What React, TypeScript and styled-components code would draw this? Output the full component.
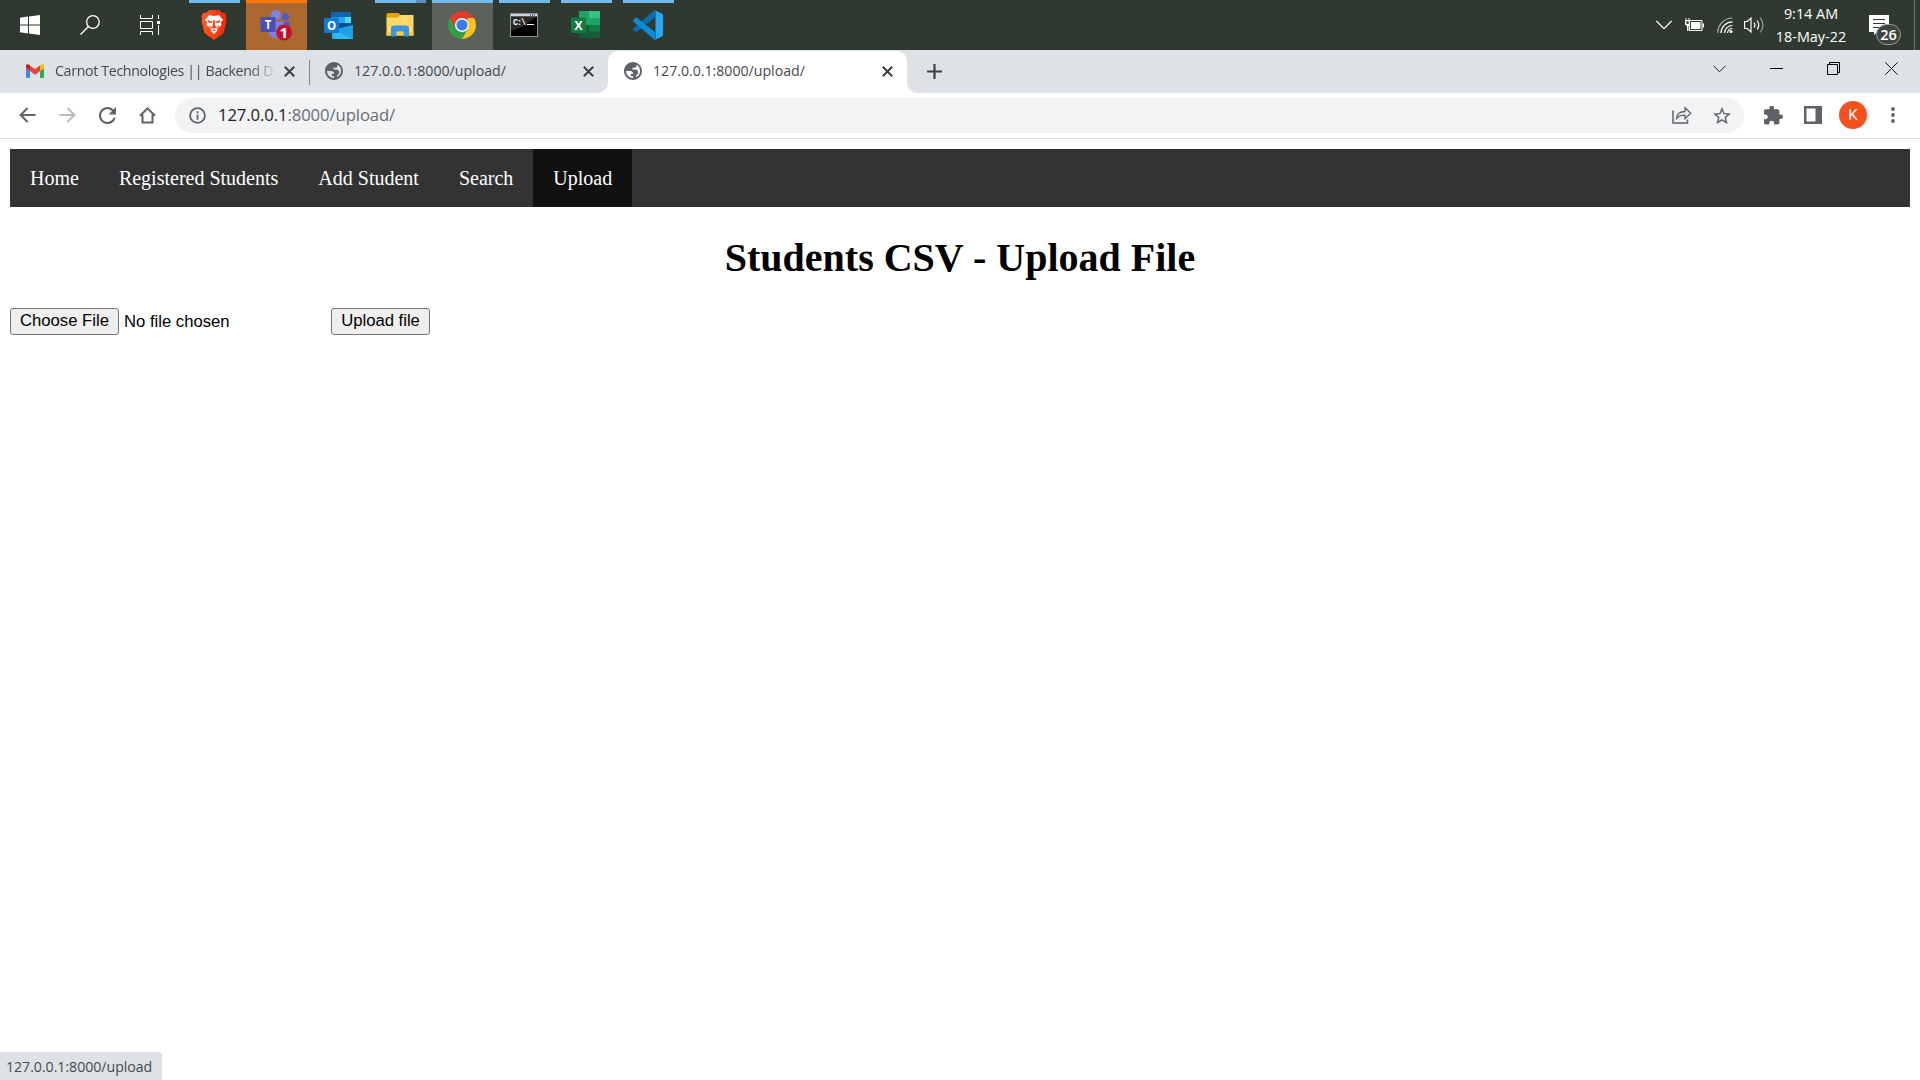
import React from "react";
import styled, { createGlobalStyle, css } from "styled-components";

const ui = `"Open Sans", "Noto Sans", sans-serif`;

const GlobalStyle = createGlobalStyle`
  * { box-sizing: border-box; }
  html, body { margin: 0; padding: 0; background: #fff; overflow: hidden; }
  svg { display: block; flex: none; }
`;

const Screen = styled.div`
  display: flex;
  flex-direction: column;
  width: 1920px;
  height: 1080px;
  background: #fff;
`;

/* ---------- Taskbar ---------- */

const Taskbar = styled.header`
  display: flex;
  justify-content: space-between;
  height: 50px;
  background: #2f3930;
`;

const TaskGroup = styled.div`
  display: flex;
`;

const SystemButton = styled.div`
  display: flex;
  align-items: center;
  justify-content: center;
  width: 60px;
  height: 50px;
`;

const Apps = styled.div`
  display: flex;
  gap: 1px;
  margin-left: 4px;
`;

type Mode = "running" | "active" | "alert" | "idle" | "stacked";

const AppSlot = styled.div<{ $mode: Mode }>`
  display: flex;
  flex-direction: column;
  align-items: center;
  width: 61px;
  height: 50px;
  background: ${(p) => (p.$mode === "active" ? "#5a6259" : p.$mode === "alert" ? "#ab692f" : "transparent")};
`;

const RunBar = styled.div<{ $mode: Mode }>`
  width: ${(p) => (p.$mode === "active" || p.$mode === "alert" ? "61px" : "51px")};
  height: 3px;
  ${(p) => p.$mode === "running" && css`background: #76b9ed;`}
  ${(p) => p.$mode === "active" && css`background: #76b9ed;`}
  ${(p) => p.$mode === "alert" && css`background: #ff7700;`}
  ${(p) => p.$mode === "stacked" && css`background: linear-gradient(90deg, #76b9ed 41px, #5a8db8 41px);`}
`;

const AppIcon = styled.div`
  display: flex;
  align-items: center;
  justify-content: center;
  height: 44px;
  padding-right: 2px;
`;

const Tray = styled.div`
  display: flex;
  align-items: center;
  height: 50px;
`;

const TrayIcon = styled.div<{ $w: number }>`
  display: flex;
  align-items: center;
  justify-content: center;
  width: ${(p) => p.$w}px;
  height: 50px;
`;

const Clock = styled.div`
  display: flex;
  flex-direction: column;
  align-items: center;
  width: 86px;
  padding-bottom: 1px;
  font: 14.4px/23px ${ui};
  letter-spacing: 0;
  color: #fff;
  white-space: nowrap;
`;

const Notifications = styled.div`
  position: relative;
  width: 61px;
  height: 50px;
  padding: 15px 0 0 15px;
  border-right: 1px solid #6d746d;
  margin-right: 5px;
`;

const Count = styled.span`
  position: absolute;
  left: 22px;
  top: 24px;
  width: 25px;
  height: 21px;
  border: 1px solid #9a9f9a;
  border-radius: 11px;
  background: #3e443f;
  color: #fff;
  font: 600 14.5px/19px ${ui};
  text-align: center;
`;

/* ---------- Browser chrome ---------- */

const TabStrip = styled.div`
  display: flex;
  justify-content: space-between;
  height: 43px;
  background: #dee1e6;
`;

const Tabs = styled.div`
  display: flex;
  padding: 1px 0 0 10px;
`;

const Tab = styled.div<{ $active?: boolean }>`
  position: relative;
  display: flex;
  align-items: center;
  width: 299px;
  height: 42px;
  padding: 0 14px 2px 16px;
  border-radius: 10px 10px 0 0;
  background: ${(p) => (p.$active ? "#fff" : "transparent")};
  ${(p) =>
    p.$active &&
    css`
      &::before,
      &::after {
        content: "";
        position: absolute;
        bottom: 0;
        width: 10px;
        height: 10px;
      }
      &::before {
        left: -10px;
        background: radial-gradient(circle at 0 0, transparent 9.5px, #fff 10px);
      }
      &::after {
        right: -10px;
        background: radial-gradient(circle at 100% 0, transparent 9.5px, #fff 10px);
      }
    `}
`;

const TabTitle = styled.span<{ $fade?: boolean }>`
  flex: 1;
  margin: 0 8px 0 11px;
  overflow: hidden;
  white-space: nowrap;
  font: 14.2px/22px ${ui};
  letter-spacing: ${(p) => (p.$fade ? "-0.33px" : "-0.03px")};
  color: #45494d;
  padding-bottom: 1px;
  ${(p) => p.$fade && css`mask-image: linear-gradient(90deg, #000 195px, transparent 221px);`}
`;

const Separator = styled.div`
  width: 1px;
  height: 25px;
  margin: 9px -1px 0 0;
  background: #80858b;
`;

const NewTab = styled.div`
  display: flex;
  align-items: center;
  justify-content: center;
  width: 55px;
  height: 40px;
`;

const WindowControls = styled.div`
  display: flex;
  height: 37px;
`;

const ControlButton = styled.div`
  display: flex;
  align-items: center;
  justify-content: center;
  width: 57.4px;
`;

const Toolbar = styled.div`
  display: flex;
  align-items: center;
  height: 46px;
  border-bottom: 1px solid #dadce0;
  background: #fff;
  padding: 0 7px 1px 8px;
`;

const ToolButton = styled.div<{ $w?: number }>`
  display: flex;
  align-items: center;
  justify-content: center;
  width: ${(p) => p.$w ?? 40}px;
  height: 40px;
`;

const Omnibox = styled.div`
  display: flex;
  align-items: center;
  width: 1570px;
  height: 35px;
  margin: 0 9px 0 7px;
  padding: 0 2px 0 14px;
  border-radius: 18px;
  background: #f1f3f4;
`;

const Address = styled.span`
  flex: 1;
  margin-left: 12px;
  font: 16.7px/24px ${ui};
  letter-spacing: -0.1px;
  color: #6a6e73;
  b { font-weight: 400; color: #202124; }
`;

const Avatar = styled.div`
  width: 28px;
  height: 28px;
  border-radius: 50%;
  background: #f4511e;
  color: #fff;
  font: 15px/28px Roboto, sans-serif;
  text-align: center;
`;

/* ---------- Page ---------- */

const Page = styled.main`
  position: relative;
  flex: 1;
  padding: 10px;
  font-family: "Liberation Serif", serif;
`;

const Nav = styled.nav`
  display: flex;
  height: 58px;
  background: #333;
`;

const NavLink = styled.a<{ $active?: boolean }>`
  padding: 18px 20px 17px;
  font-size: 20px;
  line-height: 23px;
  color: #fff;
  background: ${(p) => (p.$active ? "#111" : "transparent")};
`;

const Title = styled.h1`
  margin: 27px 0;
  font-size: 40px;
  line-height: 47px;
  text-align: center;
`;

const Form = styled.div`
  display: flex;
  align-items: center;
  font: 16.667px/20px "Liberation Sans", Arial, sans-serif;
`;

const FormButton = styled.button<{ $w: number }>`
  width: ${(p) => p.$w}px;
  height: 27px;
  padding: 0 0 2px;
  border: 1px solid #767676;
  border-radius: 3px;
  background: #efefef;
  font: inherit;
  color: #000;
  white-space: nowrap;
`;

const FileName = styled.span`
  width: 207px;
  margin-left: 5px;
`;

const StatusBubble = styled.div`
  position: absolute;
  left: 0;
  bottom: 0;
  width: 162px;
  height: 28px;
  padding-left: 6px;
  border-radius: 0 5px 0 0;
  background: #dee1e6;
  box-shadow: 0 0 1px #b9bcc1;
  font: 14.2px/29px ${ui};
  letter-spacing: -0.05px;
  color: #45494d;
`;

/* ---------- Icons ---------- */

const Globe = () => (
  <svg width="18" height="18" viewBox="2 2 20 20">
    <path fill="#5f6368" d="M12 2C6.48 2 2 6.48 2 12s4.48 10 10 10 10-4.480 10-10S17.520 2 12 2zm0 17.800c-4.300 0-7.800-3.400-7.800-7.800h4.300c2.400 0 3.700 1 3.700 3.100H9.600v2.700h2.600c.3.900-.1 1.500-.2 2zm3.500-.9v-2.500c1.500-.2 2.200-1.400 2.200-3 0-2.200-1.300-3.200-3.300-3.200h-3V8.300h2.700c1.300 0 1.900-1.200 1.900-3.300 2.300 1.200 3.800 3.900 3.800 7 0 3-1.700 5.600-4.300 6.900z" />
  </svg>
);

const Close = () => (
  <svg width="11" height="11" viewBox="0 0 11 11" stroke="#3c4043" strokeWidth="2">
    <path d="M.8.8l9.400 9.400M10.200.8L.8 10.200" />
  </svg>
);

const Gmail = () => (
  <svg width="18" height="18" viewBox="0 0 18 18">
    <path fill="#4285f4" d="M0 6l4 3v7H1.200A1.200 1.200 0 0 1 0 14.800z" />
    <path fill="#34a853" d="M18 6l-4 3v7h2.800a1.200 1.200 0 0 0 1.200-1.200z" />
    <path fill="#ea4335" d="M4 3.500l5 3.800 5-3.800V9l-5 3.800L4 9z" />
    <path fill="#c5221f" d="M0 4.200C0 2.200 2.200 1.800 3.500 3L4 3.500V9L0 6z" />
    <path fill="#fbbc04" d="M18 4.200c0-2-2.200-2.400-3.500-1.200l-.5.500V9l4-3z" />
  </svg>
);

const Windows = () => (
  <svg width="20" height="20" viewBox="0 0 20 20" fill="#fff">
    <path d="M0 2.800L8 1.600V9.500H0zM9 1.500L20 0v9.500H9zM0 10.500h8v7.900L0 17.200zM9 10.500h11V20L9 18.500z" />
  </svg>
);

const Search = () => (
  <svg width="20" height="20" viewBox="0 0 20 20" fill="none" stroke="#fff" strokeWidth="1.300">
    <circle cx="12.900" cy="7" r="6.300" />
    <path d="M8.500 11.500L.5 19.500" />
  </svg>
);

const TaskView = () => (
  <svg width="20" height="20" viewBox="0 0 20 20" fill="none" stroke="#fff">
    <path d="M.5 0v3.500h12V0M.5 20v-3.500h12V20M.5 6.500h12v7H.5zM18.500 0v4M18.500 10v10" />
    <path d="M17 6h3v3h-3z" fill="#fff" stroke="none" />
  </svg>
);

const Brave = () => (
  <svg width="26" height="30" viewBox="0 0 26 30">
    <defs>
      <linearGradient id="brave">
        <stop offset="0" stopColor="#ff5a1f" />
        <stop offset="1" stopColor="#f9250b" />
      </linearGradient>
    </defs>
    <path fill="url(#brave)" d="M8 0h10l3 3 2.500-.2L25.500 6 25 9l.5 2-3 12L13 30 3.500 23 .5 11 1 9 .5 6l2-3.200L5 3z" />
    <path fill="#fff" d="M8 5l5 1 5-1 4 5-2 2 .5 3-4.500 4 .5 1.500L13 24l-3.500-3.500.5-1.500-4.500-4L6 12l-2-2z" />
    <path fill="#fb421c" d="M6.500 10l5 1.500-1 1.500-3-.5zM19.500 10l-5 1.500 1 1.500 3-.5zM12.300 10h1.400l.5 6 2 1.200L13 18.800 9.800 17.200l2-1.200zM8 15l3 3.500L8 17zM18 15l-3 3.500 3-1.500zM11 20.500l2-1 2 1-2 .8z" />
  </svg>
);

const Glyph = styled.text`
  font-family: ${ui};
  font-weight: 700;
  fill: #fff;
  text-anchor: middle;
`;

const Teams = () => (
  <svg width="32" height="32" viewBox="-0.5 -0.5 32 32">
    <circle cx="25" cy="7" r="3.500" fill="#5059c9" />
    <path fill="#5059c9" d="M18 12h11v10a6 6 0 0 1-11 1z" />
    <circle cx="15.500" cy="5.500" r="5" fill="#7b83eb" />
    <path fill="#7b83eb" d="M8 12h15v10c0 9-14 9-15 0z" />
    <rect x="0" y="7.500" width="15" height="15" rx="1" fill="#464eb8" />
    <Glyph x="7.500" y="19" fontSize="11.500">T</Glyph>
    <circle cx="23.500" cy="23" r="8" fill="#c8102e" />
    <Glyph x="23.300" y="28.500" fontSize="15">1</Glyph>
  </svg>
);

const Outlook = () => (
  <svg width="30" height="28" viewBox="0 0 30 28">
    <path fill="#0f64b0" d="M8 1h20v15H8z" />
    <path fill="#1490df" d="M8 6h7v6H8z" />
    <path fill="#28a8ea" d="M15 6h7v6h-7z" />
    <path fill="#50d9ff" d="M22 6h6v6h-6z" />
    <path fill="#0a4c8c" d="M8 12h20l2 3-11 6L8 15z" />
    <path fill="#1aa0e8" d="M30 14v14H9V19z" />
    <path fill="#2fb7f3" d="M9 18l21 10H10z" />
    <rect x="1" y="7" width="15" height="15" rx="1" fill="#0f78d4" />
    <Glyph x="8.500" y="18.500" fontSize="11.500">O</Glyph>
  </svg>
);

const Explorer = () => (
  <svg width="28" height="24" viewBox="0 0 28 24">
    <path fill="#e5a100" d="M.5 1.500A1.500 1.500 0 0 1 2 0h10.500l2 2v4H.5z" />
    <path fill="#ffd86b" d="M.5 4.500h11l3-2.500h13v20.500H.5z" />
    <path fill="#fbcb4a" d="M.5 19h27v3.500H.5z" />
    <path fill="#3b96dc" d="M8 12.500h12a3 3 0 0 1 3 3V23.500h-5.500v-5h-7v5H5v-8a3 3 0 0 1 3-3z" />
    <path fill="#2b7fc4" d="M5 17h5.500l1.500 1.500h5l1-1.500h5v1l-5.500.5h-7L5 18z" opacity=".35" />
  </svg>
);

const Chrome = () => (
  <svg width="28" height="28" viewBox="0 0 28 28">
    <path fill="#34a046" d="M1.900 7A14 14 0 0 0 14 28l6.060-10.500H14L7.940 17.500z" />
    <path fill="#fcc31e" d="M26.100 7A14 14 0 0 1 14 28l6.060-10.500L21 14l-2-7z" />
    <path fill="#e33b2e" d="M1.900 7a14 14 0 0 1 24.200 0H14l-6.060 10.500z" />
    <circle cx="14" cy="14" r="7" fill="#fff" />
    <circle cx="14" cy="14" r="5.600" fill="#3b7ded" />
  </svg>
);

const Cmd = () => (
  <svg width="28" height="24" viewBox="0 0 28 24">
    <rect x=".5" y=".5" width="27" height="23" fill="#000" stroke="#8d9295" />
    <path fill="#cfd4d6" d="M1 1h26v2.500H1z" />
    <path fill="#3f4241" d="M1 3.500h26L12 14 1 18z" opacity=".65" />
    <path stroke="#526d86" d="M20.500 1v2M22.500 1v2M24.500 1v2" />
    <text x="3" y="12" fill="#fff" fontFamily="Liberation Mono, monospace" fontWeight="700" fontSize="8.500" textLength="13">C:\</text>
    <path stroke="#fff" d="M17 11.500h7" />
  </svg>
);

const Excel = () => (
  <svg width="30" height="28" viewBox="0 0 30 28">
    <path fill="#21a366" d="M8 1a1 1 0 0 1 1-1h9v14H8z" />
    <path fill="#33c481" d="M18 0h10a1 1 0 0 1 1 1v6H18z" />
    <path fill="#21a366" d="M18 7h11v7H18z" />
    <path fill="#185c37" d="M8 14h21v12a1 1 0 0 1-1 1H9a1 1 0 0 1-1-1z" />
    <path fill="#107c41" d="M18 14h11v6.500H18z" />
    <rect x="0" y="6.500" width="15" height="15.500" rx="1" fill="#107c41" />
    <Glyph x="7.500" y="18.500" fontSize="12">X</Glyph>
  </svg>
);

const VSCode = () => (
  <svg width="30" height="30" viewBox="0 0 30 30">
    <path fill="#0b6cb0" d="M0 19.500l2.500 2.200c.5.400 1 .4 1.500 0L22 7.500V.3c-.6 0-1 .2-1.500.7L.3 18.400c-.4.4-.4.800-.3 1.100z" />
    <path fill="#0a8ad8" d="M.3 10L2.700 7.900c.5-.4 1-.4 1.500 0L22 22v7.800c-.6 0-1-.3-1.500-.7L.3 11.500c-.4-.5-.4-1 0-1.500z" />
    <path fill="#2aa7f2" d="M21.500 30c-.5 0-.9-.3-1.200-.6 1 .7 2.200 0 2.200-1V1.700c0-1.200-1.300-1.800-2.200-1 .4-.4.900-.6 1.500-.5L29 3.500c.6.3 1 .9 1 1.500v20c0 .7-.4 1.200-1 1.500z" />
  </svg>
);

const Star = () => (
  <svg width="18" height="17" viewBox="2 2 20 19">
    <path fill="#5f6368" d="M22 9.240l-7.190-.62L12 2 9.190 8.630 2 9.240l5.460 4.730L5.820 21 12 17.270 18.180 21l-1.630-7.030zM12 15.400l-3.760 2.270 1-4.280-3.320-2.880 4.380-.38L12 6.100l1.710 4.040 4.380.38-3.320 2.880 1 4.280z" />
  </svg>
);

const apps: { name: string; mode: Mode; icon: React.ReactNode }[] = [
  { name: "brave", mode: "running", icon: <Brave /> },
  { name: "teams", mode: "alert", icon: <Teams /> },
  { name: "outlook", mode: "idle", icon: <Outlook /> },
  { name: "explorer", mode: "stacked", icon: <Explorer /> },
  { name: "chrome", mode: "active", icon: <Chrome /> },
  { name: "cmd", mode: "running", icon: <Cmd /> },
  { name: "excel", mode: "running", icon: <Excel /> },
  { name: "vscode", mode: "running", icon: <VSCode /> },
];

const links = ["Home", "Registered Students", "Add Student", "Search", "Upload"];

export default function App() {
  return (
    <Screen>
      <GlobalStyle />
      <Taskbar>
        <TaskGroup>
          <SystemButton><Windows /></SystemButton>
          <SystemButton><Search /></SystemButton>
          <SystemButton><TaskView /></SystemButton>
          <Apps>
            {apps.map((a) => (
              <AppSlot key={a.name} $mode={a.mode}>
                <RunBar $mode={a.mode} />
                <AppIcon>{a.icon}</AppIcon>
              </AppSlot>
            ))}
          </Apps>
        </TaskGroup>
        <Tray>
          <TrayIcon $w={30}>
            <svg width="16" height="10" viewBox="0 0 16 10" fill="none" stroke="#fff" strokeWidth="1.200"><path d="M.4 1l7.600 7.600L15.600 1" /></svg>
          </TrayIcon>
          <TrayIcon $w={30}>
            <svg width="21" height="14" viewBox="0 0 21 14">
              <path d="M5.500 2.500h12.500v10H5.500z" fill="none" stroke="#fff" />
              <path fill="#fff" d="M7 4h9.500v7H7zM18.500 5.500H20v4h-1.500zM1 2h5v4.500L4.500 8v5H3V8L1 6.500zM1.500 0h1v2h-1zM4.500 0h1v2h-1z" />
              <path fill="#2f3930" d="M2.300 3.300h2.400v2.500H2.300z" />
            </svg>
          </TrayIcon>
          <TrayIcon $w={31}>
            <svg width="16" height="16" viewBox="0 0 16 16" fill="none" stroke="#fff" strokeWidth="1.200">
              <path d="M.7 16A15 15 0 0 1 15.500 1" opacity=".6" />
              <path d="M4 16A11.500 11.500 0 0 1 15.500 4.800M7.500 16a8 8 0 0 1 8-7.500" />
              <path d="M10.500 16a5 5 0 0 1 5-4.500" />
              <circle cx="14" cy="14.500" r="1.500" fill="#fff" stroke="none" />
            </svg>
          </TrayIcon>
          <TrayIcon $w={28}>
            <svg width="20" height="18" viewBox="0 0 20 18" fill="none" stroke="#fff" strokeWidth="1.200">
              <path d="M.6 5.500h2.600L7 2v14l-3.800-3.500H.6z" />
              <path d="M10 6.500q2 2.500 0 5M13 4.500q3.500 4.500 0 9" />
              <path d="M16 1.500q6 7.500 0 15" opacity=".5" />
            </svg>
          </TrayIcon>
          <Clock><span>9:14 AM</span><span>18-May-22</span></Clock>
          <Notifications>
            <svg width="20" height="20" viewBox="0 0 20 20">
              <path fill="#fff" d="M0 0h20v17H8l-3 3v-3H0z" />
              <path stroke="#2f3930" d="M4 4.500h12M4 8.500h12M4 12.500h12" />
            </svg>
            <Count>26</Count>
          </Notifications>
        </Tray>
      </Taskbar>

      <TabStrip>
        <Tabs>
          <Tab><Gmail /><TabTitle $fade>Carnot Technologies || Backend D</TabTitle><Close /></Tab>
          <Separator />
          <Tab><Globe /><TabTitle>127.0.0.1:8000/upload/</TabTitle><Close /></Tab>
          <Tab $active><Globe /><TabTitle>127.0.0.1:8000/upload/</TabTitle><Close /></Tab>
          <NewTab>
            <svg width="15" height="15" viewBox="0 0 15 15" stroke="#3c4043" strokeWidth="2.200"><path d="M7.500 0v15M0 7.500h15" /></svg>
          </NewTab>
        </Tabs>
        <WindowControls>
          <ControlButton>
            <svg width="13" height="8" viewBox="0 0 13 8" fill="none" stroke="#222"><path d="M.3.6l6.200 6.200L12.700.6" /></svg>
          </ControlButton>
          <ControlButton>
            <svg width="13" height="1" viewBox="0 0 13 1"><path fill="#000" d="M0 0h13v1H0z" /></svg>
          </ControlButton>
          <ControlButton>
            <svg width="13" height="13" viewBox="0 0 13 13" fill="none" stroke="#000"><path d="M.5 2.500h10v10H.5zM2.500 2V.5h10v10H11" /></svg>
          </ControlButton>
          <ControlButton>
            <svg width="13" height="13" viewBox="0 0 13 13" stroke="#111"><path d="M.3.3l12.400 12.400M12.700.3L.3 12.700" /></svg>
          </ControlButton>
        </WindowControls>
      </TabStrip>

      <Toolbar>
        <ToolButton>
          <svg width="17" height="16" viewBox="0 0 17 16" fill="none" stroke="#5f6368" strokeWidth="2"><path d="M16.500 8H2M8.600 1L1.600 8l7 7" /></svg>
        </ToolButton>
        <ToolButton>
          <svg width="17" height="16" viewBox="0 0 17 16" fill="none" stroke="#babcbe" strokeWidth="2"><path d="M.5 8H15M8.400 1l7 7-7 7" /></svg>
        </ToolButton>
        <ToolButton>
          <svg width="17" height="17" viewBox="4 4 16 16"><path fill="#5f6368" d="M17.650 6.350A7.960 7.960 0 0 0 12 4a8 8 0 1 0 7.730 10h-2.080A6 6 0 1 1 12 6c1.660 0 3.140.69 4.220 1.780L13 11h7V4z" /></svg>
        </ToolButton>
        <ToolButton>
          <svg width="17" height="17" viewBox="0 0 17 17" fill="none" stroke="#5f6368" strokeWidth="2"><path d="M1 8.700L8.500 1.400 16 8.700M3.500 7.500V15.500h10V7.500" /></svg>
        </ToolButton>
        <Omnibox>
          <svg width="17" height="17" viewBox="0 0 17 17" fill="none" stroke="#5f6368" strokeWidth="1.800"><circle cx="8.500" cy="8.500" r="7.400" /><path d="M8.500 4.300v1.900M8.500 7.600v5.200" /></svg>
          <Address><b>127.0.0.1</b>:8000/upload/</Address>
          <ToolButton>
            <svg width="20" height="18" viewBox="0 0 20 18" fill="none" stroke="#5f6368" strokeWidth="1.500">
              <path d="M1 4.500V17h14.500v-3.500" />
              <path d="M4.500 12.500c.5-5 3.500-7 8.500-7V1.800l5.700 5.500-5.700 5.400V9.200c-4 0-6.500.8-8.500 3.300z" strokeWidth="1.300" />
            </svg>
          </ToolButton>
          <ToolButton><Star /></ToolButton>
        </Omnibox>
        <ToolButton>
          <svg width="19" height="19" viewBox="2 1.500 21 21"><path fill="#5f6368" d="M20.500 11H19V7a2 2 0 0 0-2-2h-4V3.500a2.500 2.500 0 0 0-5 0V5H4a2 2 0 0 0-2 2v3.800h1.500a2.700 2.700 0 0 1 0 5.400H2V20a2 2 0 0 0 2 2h3.800v-1.500a2.700 2.700 0 0 1 5.400 0V22H17a2 2 0 0 0 2-2v-4h1.500a2.500 2.500 0 0 0 0-5z" /></svg>
        </ToolButton>
        <ToolButton>
          <svg width="18" height="18" viewBox="0 0 18 18"><path fill="#5f6368" fillRule="evenodd" d="M0 0h18v18H0zM2.500 2.500v13h9v-13z" /></svg>
        </ToolButton>
        <ToolButton><Avatar>K</Avatar></ToolButton>
        <ToolButton>
          <svg width="4" height="18" viewBox="0 0 4 18" fill="#5f6368"><circle cx="2" cy="3" r="1.900" /><circle cx="2" cy="9" r="1.900" /><circle cx="2" cy="15" r="1.900" /></svg>
        </ToolButton>
      </Toolbar>

      <Page>
        <Nav>
          {links.map((l) => (
            <NavLink key={l} $active={l === "Upload"}>{l}</NavLink>
          ))}
        </Nav>
        <Title>Students CSV - Upload File</Title>
        <Form>
          <FormButton $w={109}>Choose File</FormButton>
          <FileName>No file chosen</FileName>
          <FormButton $w={99}>Upload file</FormButton>
        </Form>
        <StatusBubble>127.0.0.1:8000/upload</StatusBubble>
      </Page>
    </Screen>
  );
}
